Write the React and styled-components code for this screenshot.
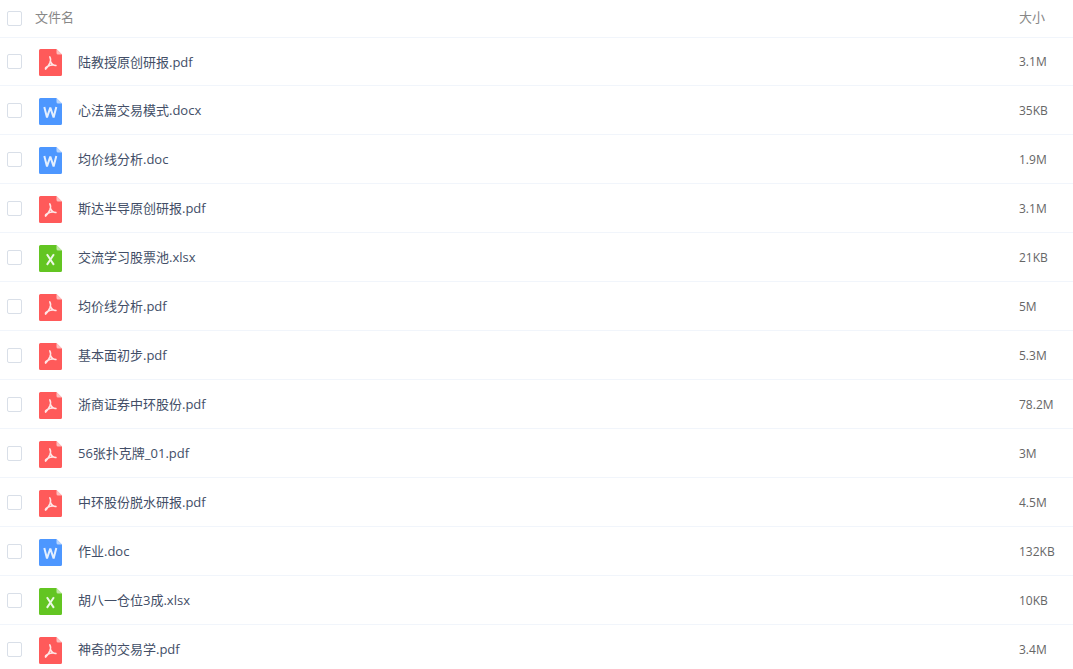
import React, { useState } from "react"
import styled, { createGlobalStyle } from "styled-components"

const GlobalStyle = createGlobalStyle`
  body {
    margin: 0;
    background: #fff;
    font-family: "Open Sans", "Noto Sans CJK SC", sans-serif;
    font-size: 13px;
  }
`

const FileTable = styled.table`
  width: 100%;
  table-layout: fixed;
  border-collapse: separate;
  border-spacing: 0;
`

const HeaderCell = styled.th`
  box-sizing: border-box;
  width: ${(props) => props.$width || "auto"};
  height: 38px;
  padding: 0 0 4px;
  border-bottom: 1px solid #f1f5fb;
  color: #888;
  font-weight: 400;
  line-height: 20px;
  text-align: left;
`

const Cell = styled.td`
  box-sizing: border-box;
  height: 49px;
  padding: 0;
  border-bottom: 1px solid #f1f5fb;

  tr:first-child > & {
    height: 48px;
  }
`

const SizeCell = styled(Cell)`
  padding-top: 1px;
  color: #666;
  font-size: 12px;
  line-height: 20px;
`

const Checkbox = styled.input.attrs({ type: "checkbox" })`
  appearance: none;
  display: block;
  box-sizing: border-box;
  width: 15px;
  height: 15px;
  margin: 0 0 0 7px;
  border: 1px solid #d9dfe8;
  border-radius: 2px;
  background: #fff;
  cursor: pointer;

  &:checked {
    border-color: #4d97ff;
    background: #4d97ff;
  }
`

const HeaderCheckbox = styled(Checkbox)`
  margin-top: 4px;
`

const FileLabel = styled.label`
  display: flex;
  align-items: center;
  gap: 16px;
  padding-left: 4px;
  color: #424e67;
  line-height: 20px;
  white-space: nowrap;
  cursor: pointer;
`

const Icon = styled.svg`
  flex: none;
  width: 23px;
  height: 27px;
  margin-top: 2px;
`

const COLORS = {
  pdf: "#ff5a5a",
  doc: "#4d97ff",
  xls: "#63c522",
}

const FILES = [
  { name: "陆教授原创研报.pdf", size: "3.1M", type: "pdf" },
  { name: "心法篇交易模式.docx", size: "35KB", type: "doc" },
  { name: "均价线分析.doc", size: "1.9M", type: "doc" },
  { name: "斯达半导原创研报.pdf", size: "3.1M", type: "pdf" },
  { name: "交流学习股票池.xlsx", size: "21KB", type: "xls" },
  { name: "均价线分析.pdf", size: "5M", type: "pdf" },
  { name: "基本面初步.pdf", size: "5.3M", type: "pdf" },
  { name: "浙商证券中环股份.pdf", size: "78.2M", type: "pdf" },
  { name: "56张扑克牌_01.pdf", size: "3M", type: "pdf" },
  { name: "中环股份脱水研报.pdf", size: "4.5M", type: "pdf" },
  { name: "作业.doc", size: "132KB", type: "doc" },
  { name: "胡八一仓位3成.xlsx", size: "10KB", type: "xls" },
  { name: "神奇的交易学.pdf", size: "3.4M", type: "pdf" },
]

function FileIcon({ type }) {
  return (
    <Icon viewBox="0 0 23 27" fill="none" aria-hidden="true">
      <path
        d="M1.5 0H17.5L23 5.5V25.5a1.5 1.5 0 0 1-1.5 1.5H1.5a1.5 1.5 0 0 1-1.5-1.5V1.5a1.5 1.5 0 0 1 1.5-1.5Z"
        fill={COLORS[type]}
      />
      <path d="M17.5 0L23 5.5H19a1.5 1.5 0 0 1-1.5-1.5Z" fill="#fff" fillOpacity="0.6" />
      {type === "pdf" && (
        <g stroke="#fff" strokeOpacity="0.85" strokeLinecap="round" strokeLinejoin="round">
          <path
            d="M10.8 7.9C11.9 9.6 11.7 11.8 10.8 14C9.8 16.2 8.6 18.4 6.6 20.1C6.2 19.2 7 18.2 8.8 17.3C11.2 16.2 14 15.6 16.9 16.5C14.4 16.6 12.4 14.8 11.4 12.4"
            strokeWidth="1.6"
          />
        </g>
      )}
      {type === "doc" && (
        <path
          d="M5.3 9L8 19.4L11.3 9.6L14.6 19.4L17.3 9"
          stroke="#fff"
          strokeOpacity="0.85"
          strokeWidth="2"
          strokeLinejoin="bevel"
        />
      )}
      {type === "xls" && (
        <path
          d="M7.9 9.3L14.9 19.9M14.9 9.3L7.9 19.9"
          stroke="#fff"
          strokeOpacity="0.88"
          strokeWidth="2"
        />
      )}
    </Icon>
  )
}

function App() {
  const [selected, setSelected] = useState([])

  const toggleAll = () => {
    setSelected(selected.length === FILES.length ? [] : FILES.map((file) => file.name))
  }

  const toggle = (name) => {
    setSelected(
      selected.includes(name) ? selected.filter((item) => item !== name) : [...selected, name]
    )
  }

  return (
    <>
      <GlobalStyle />
      <FileTable>
        <thead>
          <tr>
            <HeaderCell $width="35px">
              <HeaderCheckbox
                aria-label="全选"
                checked={selected.length === FILES.length}
                onChange={toggleAll}
              />
            </HeaderCell>
            <HeaderCell>文件名</HeaderCell>
            <HeaderCell $width="54px">大小</HeaderCell>
          </tr>
        </thead>
        <tbody>
          {FILES.map((file, index) => (
            <tr key={file.name}>
              <Cell>
                <Checkbox
                  id={`file-${index}`}
                  checked={selected.includes(file.name)}
                  onChange={() => toggle(file.name)}
                />
              </Cell>
              <Cell>
                <FileLabel htmlFor={`file-${index}`}>
                  <FileIcon type={file.type} />
                  {file.name}
                </FileLabel>
              </Cell>
              <SizeCell>{file.size}</SizeCell>
            </tr>
          ))}
        </tbody>
      </FileTable>
    </>
  )
}

export default App
